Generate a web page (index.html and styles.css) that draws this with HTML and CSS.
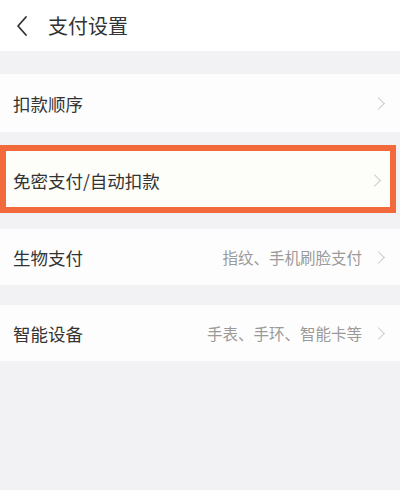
FILE: index.html
```html
<!DOCTYPE html>
<html lang="zh-CN">
<head>
  <meta charset="UTF-8" />
  <meta name="viewport" content="width=device-width, initial-scale=1.0" />
  <title>支付设置</title>
  <link rel="stylesheet" href="styles.css">
</head>
<body>
  <header class="topbar">
    <svg class="back" width="14" height="22" viewBox="0 0 14 22">
      <path d="M11 2 L3 11 L11 20" fill="none" stroke="#333" stroke-width="1.8" stroke-linecap="round" stroke-linejoin="round" />
    </svg>
    <h1>支付设置</h1>
  </header>

  <div class="group first">
    <div class="row">
      <span class="label">扣款顺序</span>
      <span class="arrow"></span>
    </div>
  </div>

  <div class="group marked">
    <div class="row">
      <span class="label">免密支付/自动扣款</span>
      <span class="arrow"></span>
    </div>
  </div>

  <div class="group after-mark">
    <div class="row">
      <span class="label">生物支付</span>
      <span class="hint">指纹、手机刷脸支付</span>
      <span class="arrow"></span>
    </div>
  </div>

  <div class="group">
    <div class="row">
      <span class="label">智能设备</span>
      <span class="hint">手表、手环、智能卡等</span>
      <span class="arrow"></span>
    </div>
  </div>
</body>
</html>
```

FILE: styles.css
```css
:root {
  --bg: #f2f2f4;
  --card: #fdfdfd;
  --text: #333;
  --muted: #9a9a9a;
  --mark: #f26a3c;
}
* {
  box-sizing: border-box;
  font-family: "Noto Sans CJK SC", "Noto Sans", sans-serif;
}
body {
  margin: 0;
  min-height: 100vh;
  background: var(--bg);
  color: var(--text);
}
.topbar {
  height: 51px;
  background: #fff;
  display: flex;
  align-items: center;
  padding-left: 15px;
  gap: 19px;
}
.back {
  flex: none;
}
h1 {
  margin: 0;
  font-size: 20px;
  font-weight: 400;
  color: var(--text);
}
.group {
  background: var(--card);
  margin-top: 20px;
}
.group.first {
  margin-top: 23px;
}
.group.after-mark {
  margin-top: 16px;
}
.row {
  height: 56px;
  display: flex;
  align-items: center;
  padding: 0 15px 0 13px;
}
.group.first .row {
  height: 58px;
}
.label {
  font-size: 17.5px;
  flex: 1;
}
.hint {
  font-size: 15.5px;
  color: var(--muted);
  margin-right: 12px;
}
.arrow {
  width: 9px;
  height: 9px;
  border-top: 1.5px solid #c9c9c9;
  border-right: 1.5px solid #c9c9c9;
  transform: rotate(45deg);
  margin-right: 2px;
}
.group.marked {
  margin: 13px 4px 0 0;
  background: #fdfdf9;
  border: 6px solid var(--mark);
}
.group.marked .row {
  height: 56px;
  padding: 3px 9px 0 7px;
}
```
